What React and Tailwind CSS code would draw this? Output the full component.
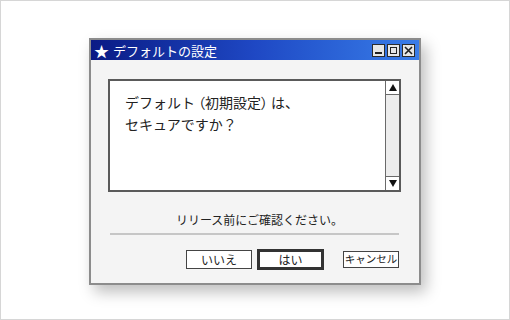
import React from 'react';

const jp = "font-['Noto_Sans_CJK_JP','Noto_Sans',sans-serif]";

const TitleButton = ({ children }) => (
  <div className="w-[13px] h-[13px] bg-[#e6e6e6] border border-[#2b2b2b] flex items-center justify-center">
    {children}
  </div>
);

export default function App() {
  return (
    <div className={`w-[510px] h-[320px] bg-white border border-[#d6d6d6] pl-[88px] pt-[37px] ${jp}`}>
      {/* Dialog window */}
      <div className="w-[332px] h-[247px] border-2 border-[#8c8c8c] bg-[#f4f4f4] flex flex-col shadow-[5px_7px_14px_rgba(0,0,0,0.26)]">
        {/* Title bar */}
        <div className="h-[20px] flex items-center justify-between pl-[3px] pr-[4px] bg-gradient-to-r from-[#0b1a85] via-[#1f48c4] to-[#3a7de9]">
          <div className="flex items-center text-white text-[13px] leading-none">
            <span className="text-[15px] mr-[4px]">★</span>
            <span>デフォルトの設定</span>
          </div>
          <div className="flex items-center gap-[2px]">
            <TitleButton>
              <div className="w-[7px] h-[2px] bg-[#222] mt-[6px]" />
            </TitleButton>
            <TitleButton>
              <div className="w-[7px] h-[7px] border border-[#222]" />
            </TitleButton>
            <TitleButton>
              <svg width="9" height="9" viewBox="0 0 9 9">
                <path d="M1 1 L8 8 M8 1 L1 8" stroke="#222" strokeWidth="1.6" />
              </svg>
            </TitleButton>
          </div>
        </div>

        {/* Body */}
        <div className="flex-1 flex flex-col pl-[17px] pr-[18px] pt-[19px]">
          {/* Text area */}
          <div className="h-[113px] border-2 border-[#5a5a5a] bg-white flex">
            <div className="flex-1 pl-[15px] pt-[10px] text-[14px] leading-[22px] text-[#222]">
              <p>
                デフォルト<span className="ml-[3px] [font-feature-settings:'palt']">（</span>初期設定<span className="mr-[3px] [font-feature-settings:'palt']">）</span>は、
              </p>
              <p>セキュアですか？</p>
            </div>
            <div className="w-[14px] bg-[#ededed] border-l border-[#6a6a6a] flex flex-col justify-between">
              <div className="h-[14px] bg-white border-b border-[#6a6a6a] flex items-center justify-center">
                <svg width="8" height="7" viewBox="0 0 8 7">
                  <path d="M4 0 L8 7 L0 7 Z" fill="#111" />
                </svg>
              </div>
              <div className="h-[14px] bg-white border-t border-[#6a6a6a] flex items-center justify-center">
                <svg width="8" height="7" viewBox="0 0 8 7">
                  <path d="M0 0 L8 0 L4 7 Z" fill="#111" />
                </svg>
              </div>
            </div>
          </div>

          {/* Message */}
          <p className="mt-[20px] h-[16px] text-center text-[12px] leading-[16px] text-[#222] pl-[10px]">
            リリース前にご確認ください。
          </p>

          {/* Separator */}
          <div className="mt-[5px] mx-[2px] h-[2px] bg-[#c6c6c6]" />

          {/* Buttons */}
          <div className="mt-[14px] flex items-center justify-end pr-[2px]">
            <button className="w-[66px] h-[19px] bg-white border border-[#444] text-[12px] leading-none text-[#222]">
              いいえ
            </button>
            <button className="ml-[5px] w-[67px] h-[21px] bg-white border-[3px] border-[#333] text-[12px] leading-none text-[#222]">
              はい
            </button>
            <button className="ml-[19px] w-[56px] h-[17px] bg-white border border-[#444] text-[10.5px] leading-none text-[#222]">
              キャンセル
            </button>
          </div>
        </div>
      </div>
    </div>
  );
}
